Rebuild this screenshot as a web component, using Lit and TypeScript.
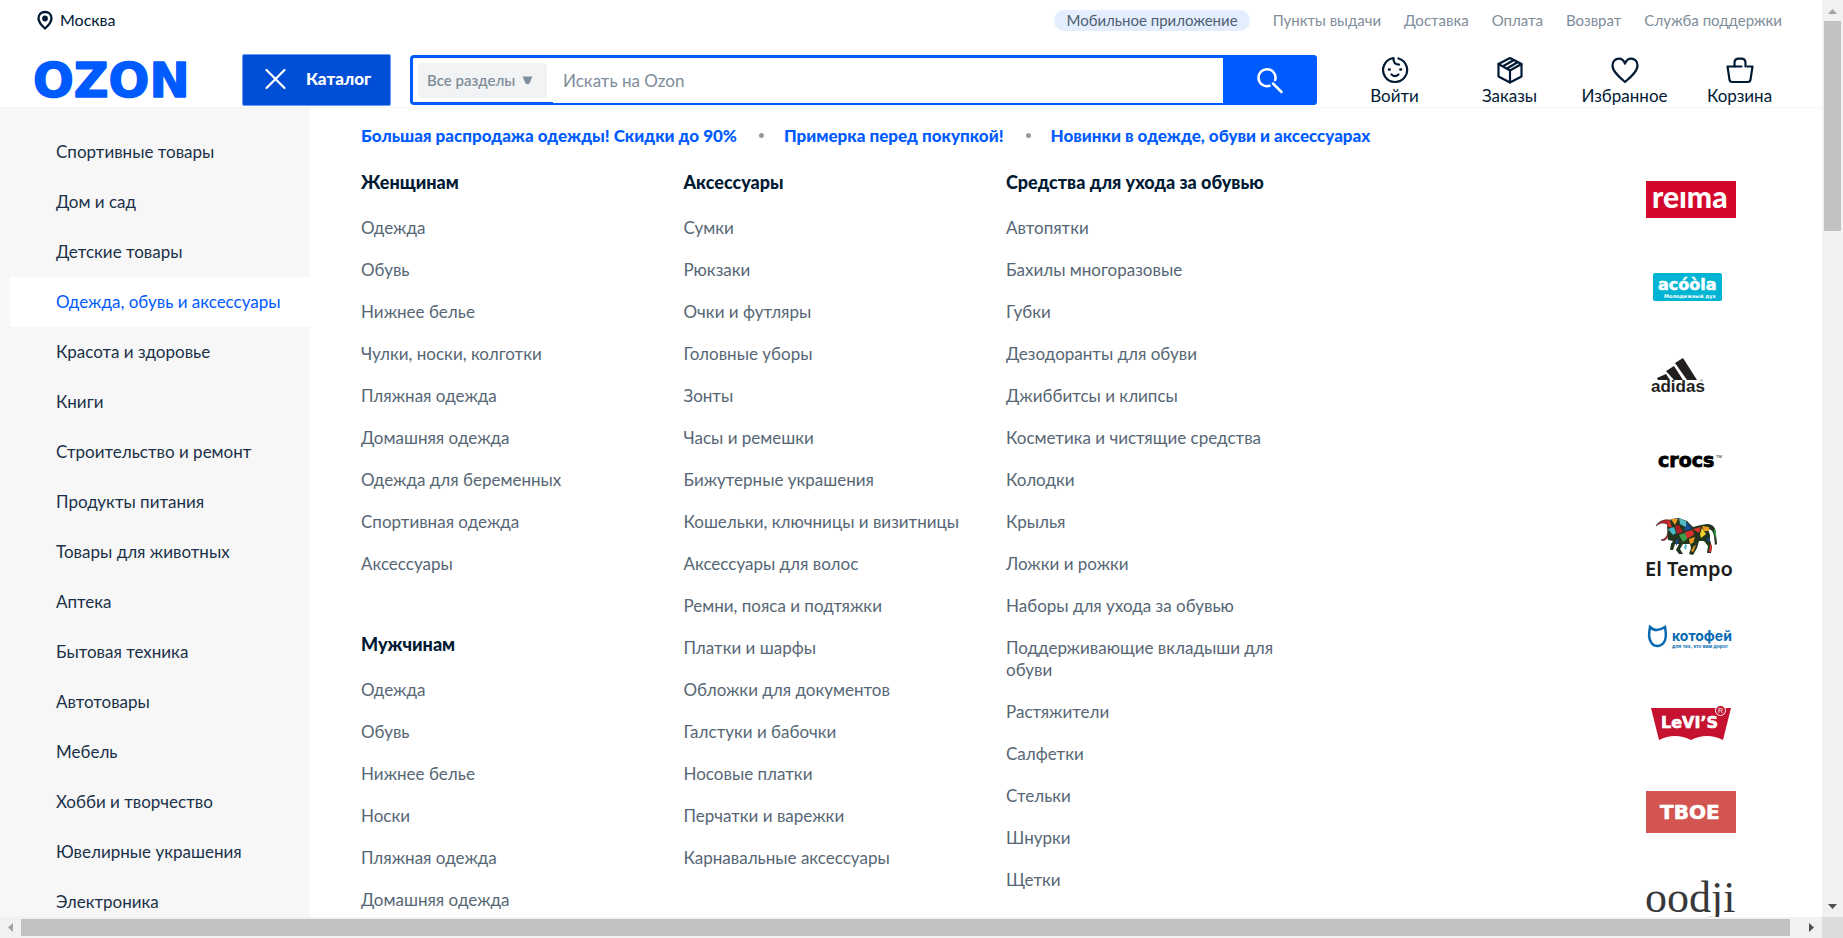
import { LitElement, html, svg, css } from "lit";
import { customElement, state } from "lit/decorators.js";
import { classMap } from "lit/directives/class-map.js";

const SERVICE_LINKS = ["Пункты выдачи", "Доставка", "Оплата", "Возврат", "Служба поддержки"];

const CATEGORIES = [
  "Спортивные товары",
  "Дом и сад",
  "Детские товары",
  "Одежда, обувь и аксессуары",
  "Красота и здоровье",
  "Книги",
  "Строительство и ремонт",
  "Продукты питания",
  "Товары для животных",
  "Аптека",
  "Бытовая техника",
  "Автотовары",
  "Мебель",
  "Хобби и творчество",
  "Ювелирные украшения",
  "Электроника",
];

const PROMOS = [
  "Большая распродажа одежды! Скидки до 90%",
  "Примерка перед покупкой!",
  "Новинки в одежде, обуви и аксессуарах",
];

interface Group {
  title: string;
  items: string[];
}

const COLUMNS: Group[][] = [
  [
    {
      title: "Женщинам",
      items: [
        "Одежда",
        "Обувь",
        "Нижнее белье",
        "Чулки, носки, колготки",
        "Пляжная одежда",
        "Домашняя одежда",
        "Одежда для беременных",
        "Спортивная одежда",
        "Аксессуары",
      ],
    },
    {
      title: "Мужчинам",
      items: ["Одежда", "Обувь", "Нижнее белье", "Носки", "Пляжная одежда", "Домашняя одежда"],
    },
  ],
  [
    {
      title: "Аксессуары",
      items: [
        "Сумки",
        "Рюкзаки",
        "Очки и футляры",
        "Головные уборы",
        "Зонты",
        "Часы и ремешки",
        "Бижутерные украшения",
        "Кошельки, ключницы и визитницы",
        "Аксессуары для волос",
        "Ремни, пояса и подтяжки",
        "Платки и шарфы",
        "Обложки для документов",
        "Галстуки и бабочки",
        "Носовые платки",
        "Перчатки и варежки",
        "Карнавальные аксессуары",
      ],
    },
  ],
  [
    {
      title: "Средства для ухода за обувью",
      items: [
        "Автопятки",
        "Бахилы многоразовые",
        "Губки",
        "Дезодоранты для обуви",
        "Джиббитсы и клипсы",
        "Косметика и чистящие средства",
        "Колодки",
        "Крылья",
        "Ложки и рожки",
        "Наборы для ухода за обувью",
        "Поддерживающие вкладыши для обуви",
        "Растяжители",
        "Салфетки",
        "Стельки",
        "Шнурки",
        "Щетки",
      ],
    },
  ],
];

const ACTIONS = [
  {
    label: "Войти",
    icon: svg`<path d="M11.500 2.300A12 12 0 1 0 17.500 2.500"/><path d="M12.500 2.100c-.2 3.900 2 6.400 5.500 6.600"/><path d="M10.500 18.500c2.300 2.200 4.700 2.200 7 0"/><path d="M8 13.500h.600M19.400 13.500h.600" stroke-width="2.600"/>`,
  },
  {
    label: "Заказы",
    icon: svg`<path d="M14 2 25.500 8v12.500L14 26.500 2.500 20.500V8z"/><path d="M2.500 8 14 14.500 25.500 8M14 14.500v12M7 10.300 17.500 4.200M11 12.500 21.500 6.300"/>`,
  },
  {
    label: "Избранное",
    icon: svg`<path d="M14 26C8 21 1.500 15.500 1.500 9.500 1.500 5.500 4.300 2.700 7.800 2.700c3 0 5 1.600 6.200 5 1.200-3.400 3.200-5 6.200-5 3.500 0 6.300 2.800 6.300 6.800C26.500 15.500 20 21 14 26z"/>`,
  },
  {
    label: "Корзина",
    icon: svg`<path d="M15.500 10.500H1.500l2 13.200c.2 1.700 1 2.300 2.700 2.300h15.600c1.700 0 2.500-.6 2.700-2.300l2-13.200h-5.300"/><path d="M8.500 10.500V7c0-2.800 1.500-4.300 4.300-4.300h2.400c2.800 0 4.300 1.500 4.300 4.300v3.500"/>`,
  },
];

/* Brand tiles share a 90x88 canvas. */
const BRANDS = [
  {
    name: "Reima",
    art: svg`<rect y="25" width="90" height="37" fill="#d4082d"/>
      <text x="6" y="52" class="lato" font-size="30" font-weight="900" fill="#fff">reıma</text>`,
  },
  {
    name: "Acoola",
    art: svg`<rect x="7" y="29" width="69" height="28" rx="2" fill="#00b5d3"/>
      <text x="12" y="46" class="wide" font-size="16" font-weight="700" fill="#fff" stroke="#fff" stroke-width=".5">acóòla</text>
      <text x="18" y="54" class="wide" font-size="5" font-weight="700" fill="#fff">Молодежный дух</text>`,
  },
  {
    name: "Adidas",
    art: svg`<g fill="#231f20"><path d="m11 46 9-4 4 6H12z"/><path d="m20 39 8-5 9 14h-9z"/><path d="m29 31 8-5 14 22h-10z"/></g>
      <text x="5" y="60" class="sans" font-size="17" font-weight="700" fill="#231f20">adidas</text>
      <text x="54" y="50" class="sans" font-size="4" fill="#231f20">®</text>`,
  },
  {
    name: "Crocs",
    art: svg`<text x="12" y="47" class="wide" font-size="19" font-weight="700" fill="#000" stroke="#000" stroke-width=".8">crocs</text>
      <text x="70" y="38" class="sans" font-size="4" fill="#000">TM</text>`,
  },
  {
    name: "El Tempo",
    art: svg`
      <path d="M24 12c-7-1-12 2-14 6 5-4 9-4 13 0M25 24c-3 5-5 10-10 8 4-1 6-3 7-8" fill="#c3262b" stroke="#1f2220" stroke-width=".6"/>
      <path d="M21 18l4-7 8-1 8 3 6 6 8-2 6-1c6 0 9 4 9 10l1 10-2 1-1-9c-1-5-3-7-6-7l2 6 0 5 2 7-1 6-4 0 1-7-4-5-5 0-2 7-4 7-4-1 2-6-1-4-7 0-3 5 3 5-4 0-3-4 3-6-4 0-2 6-3 0 1-6 2-3-5-1z" fill="#22351f"/>
      <path d="M25 11l7 0-3 6zM56 18l7 1 0 4-5 0z" fill="#f39b1d"/>
      <path d="M33 10l7 3 1 7-7-4z" fill="#53b9c4"/><path d="M41 14l5 7-8 2z" fill="#1a4a96"/>
      <path d="M24 13l2 7-5-2zM47 21l8-2-2 6z" fill="#e13429"/>
      <path d="M29 18l4-1 4 7-6 2z" fill="#ad1e25"/><path d="M22 21l6-2 2 6-3 2z" fill="#43bacb"/>
      <path d="M39 24l8-2 1 5-8 4z" fill="#d92f2b"/><path d="M54 26l2-6 4 6-5 4z" fill="#f6d12c"/>
      <path d="M33 27l6-2 2 6-4 3z" fill="#3aa14a"/><path d="M30 32l3-1-1 4-2 3z" fill="#1a4a96"/>
      <path d="M43 31l6-2-2 6-3 1z" fill="#f39b1d"/><path d="M62 28l2 5-3 0z" fill="#1a4a96"/>
      <path d="M68 20l2 4 0 7-2-6z" fill="#2ba04a"/><path d="M39 36l2 1-1 5-2-2z" fill="#53b9c4"/><path d="M64 36l2 2-1 6-2 0z" fill="#d92f2b"/><path d="M48 38l2-1-3 7-2-1z" fill="#f39b1d"/>
      <text x="-1" y="68" class="noto" font-size="20" font-weight="600" fill="#1d1d1b">El Tempo</text>`,
  },
  {
    name: "Котофей",
    art: svg`<path d="M4 31c4 4 9 4 15 0 .8 5 2.500 11-1.500 16-3.500 4-9 4-12 0-3.500-5-2.500-10-1.500-16z" fill="none" stroke="#0469b1" stroke-width="2.500"/>
      <text x="26" y="45" class="inter" font-size="14" font-weight="700" fill="#0469b1">котофей</text>
      <text x="26" y="52" class="sans" font-size="5" font-weight="700" fill="#0469b1">для тех, кто вам дорог</text>`,
  },
  {
    name: "Levi's",
    art: svg`<path d="M5 24h80l-8 32q-16-8-32 0-16-8-32 0z" fill="#c41230"/>
      <text x="15" y="44" class="wide" font-size="16" font-weight="700" fill="#fff" stroke="#fff" stroke-width=".6">LeVI’S</text>
      <circle cx="74.500" cy="26.500" r="5" fill="#c41230" stroke="#fff"/><text x="72" y="29" class="sans" font-size="7" fill="#fff">R</text>`,
  },
  {
    name: "Твое",
    art: svg`<rect y="19" width="90" height="42" fill="#d25551"/>
      <text x="14" y="47" class="wide" font-size="20" font-weight="700" fill="#fff" stroke="#fff" stroke-width=".6">ТВОЕ</text>`,
  },
  {
    name: "oodji",
    art: svg`<text x="-1" y="52" class="serif" font-size="44" fill="#38383a">oodji</text>`,
  },
];

@customElement("site-header")
class SiteHeader extends LitElement {
  static styles = css`
    :host {
      display: block;
      border-bottom: 1px solid #f5f6f8;
    }
    a {
      color: inherit;
      text-decoration: none;
    }
    .service {
      display: flex;
      justify-content: space-between;
      align-items: center;
      height: 40px;
      padding: 0 40px 0 36px;
    }
    .place {
      display: flex;
      align-items: center;
      gap: 6px;
      padding: 0;
      border: 0;
      background: none;
      font: 16px/20px Lato, sans-serif;
      color: #001a34;
    }
    .links {
      display: flex;
      align-items: center;
      gap: 23px;
      font-size: 15px;
      line-height: 21px;
      color: #808d9a;
    }
    .pill {
      padding: 0 12px;
      border-radius: 11px;
      background: #e5eeff;
      color: #4d5f71;
    }
    .bar {
      display: flex;
      align-items: flex-start;
      padding: 14px 25px 0 34px;
      height: 53px;
    }
    .logo {
      display: block;
      width: 208px;
      height: 52px;
    }
    .logo text {
      font-family: "DejaVu Sans", sans-serif;
    }
    .catalog {
      display: flex;
      align-items: center;
      gap: 20px;
      width: 149px;
      height: 52px;
      margin-right: 19px;
      padding: 0 0 2px 22px;
      border: 1px solid #6a9cf5;
      border-radius: 2px;
      background: #004ed6;
      color: #fff;
      font: 900 17px/22px Lato, sans-serif;
    }
    .search {
      display: flex;
      flex: 1;
      height: 50px;
      margin-top: 1px;
      box-sizing: border-box;
      border: 3px solid #005bff;
      border-width: 3px 0 2px 3px;
      border-radius: 4px;
    }
    .scope {
      display: grid;
      align-items: center;
      width: 140px;
      box-sizing: border-box;
      padding: 0 6px 0 5px;
      border-bottom: 1px solid #005bff;
    }
    .scope select {
      grid-area: 1 / 1;
      height: 35px;
      padding: 0 9px;
      border: 0;
      border-radius: 3px;
      appearance: none;
      background: #f2f3f5;
      color: #808d9a;
      font: 600 15px/20px Lato, sans-serif;
    }
    .scope svg {
      grid-area: 1 / 1;
      justify-self: end;
      margin-right: 14px;
      pointer-events: none;
    }
    .query {
      flex: 1;
      min-width: 0;
      padding: 0 10px;
      border: 0;
      outline: 0;
      background: none;
      color: #001a34;
      font: 17px/22px Lato, sans-serif;
    }
    .query::placeholder {
      color: #808d9a;
      opacity: 1;
    }
    .go {
      display: flex;
      align-items: center;
      justify-content: center;
      width: 94px;
      height: 50px;
      margin-top: -3px;
      border: 0;
      border-radius: 0 4px 4px 0;
      background: #005bff;
    }
    .actions {
      display: flex;
      margin-left: 20px;
      padding-top: 2px;
    }
    .action {
      display: flex;
      flex-direction: column;
      align-items: center;
      gap: 1px;
      width: 115px;
      font-size: 17px;
      line-height: 22px;
      color: #001a34;
    }
    .action svg {
      fill: none;
      stroke: #001a34;
      stroke-width: 2.2;
      stroke-linecap: round;
      stroke-linejoin: round;
    }
  `;

  render() {
    return html`
      <div class="service">
        <button class="place">
          <svg width="18" height="20" viewBox="0 0 18 20">
            <path d="M9 2c4 0 6.500 2.800 6.500 6.300C15.500 12 12.500 15.500 9 18.500 5.500 15.500 2.500 12 2.500 8.300 2.500 4.800 5 2 9 2z" fill="none" stroke="#001a34" stroke-width="2.300" />
            <circle cx="9" cy="8.500" r="2.900" fill="#001a34" />
          </svg>
          Москва
        </button>
        <nav class="links">
          <a class="pill" href="#">Мобильное приложение</a>
          ${SERVICE_LINKS.map((t) => html`<a href="#">${t}</a>`)}
        </nav>
      </div>
      <div class="bar">
        <a href="#" aria-label="Ozon">
          <svg class="logo" viewBox="0 0 208 52">
            <text x="-1" y="43" font-size="48" font-weight="700" fill="#005bff" stroke="#005bff" stroke-width="1.500" stroke-linejoin="round">OZON</text>
          </svg>
        </a>
        <button class="catalog">
          <svg width="21" height="22" viewBox="0 0 21 22">
            <path d="M1.500 2 19.500 20M19.500 2 1.500 20" stroke="#fff" stroke-width="2.200" stroke-linecap="round" />
          </svg>
          Каталог
        </button>
        <form class="search" @submit=${(e: Event) => e.preventDefault()}>
          <div class="scope">
            <select aria-label="Раздел">
              <option>Все разделы</option>
            </select>
            <svg width="11" height="9" viewBox="0 0 11 9"><path d="M.500.500h10L7.500 7.300q-2 2-4 0z" fill="#808d9a" /></svg>
          </div>
          <input class="query" type="text" aria-label="Поиск" placeholder="Искать на Ozon" />
          <button class="go" aria-label="Найти">
            <svg width="28" height="28" viewBox="0 0 28 28" fill="none" stroke="#fff" stroke-width="2.500" stroke-linecap="round">
              <path d="M13.500 19.800A8.500 8.500 0 1 1 19.200 14M17 17.500l8.500 8.500" />
            </svg>
          </button>
        </form>
        <nav class="actions">
          ${ACTIONS.map(
            (a) => html`<a class="action" href="#">
              <svg width="28" height="28" viewBox="0 0 28 28">${a.icon}</svg>
              ${a.label}
            </a>`
          )}
        </nav>
      </div>
    `;
  }
}

@customElement("brand-list")
class BrandList extends LitElement {
  static styles = css`
    :host {
      display: flex;
      flex-direction: column;
    }
    a,
    svg {
      display: block;
    }
    svg {
      overflow: visible;
    }
    .lato {
      font-family: Lato, sans-serif;
    }
    .wide {
      font-family: "DejaVu Sans", sans-serif;
    }
    .sans {
      font-family: "Liberation Sans", sans-serif;
    }
    .inter {
      font-family: Inter, sans-serif;
    }
    .noto {
      font-family: "Noto Sans", sans-serif;
    }
    .serif {
      font-family: "Liberation Serif", serif;
    }
  `;

  render() {
    return BRANDS.map(
      (b) => html`<a href="#" aria-label=${b.name}><svg width="90" height="88" viewBox="0 0 90 88">${b.art}</svg></a>`
    );
  }
}

@customElement("catalog-menu")
class CatalogMenu extends LitElement {
  @state() private active = 3;

  static styles = css`
    :host {
      display: flex;
      min-height: 0;
      overflow: hidden;
    }
    a {
      color: inherit;
      text-decoration: none;
    }
    ul {
      margin: 0;
      padding: 0;
      list-style: none;
    }
    .side {
      flex: none;
      width: 300px;
      padding: 19px 0 0 10px;
      background: #f7f7f8;
      font-size: 17px;
      line-height: 50px;
      color: #1a3148;
    }
    .category {
      display: block;
      padding-left: 46px;
    }
    .active {
      background: #fff;
      color: #005bff;
    }
    .content {
      flex: 1;
      min-width: 0;
      padding: 17px 86px 0 51px;
      font-size: 17px;
      line-height: 22px;
    }
    .promos {
      display: flex;
      gap: 22px;
      color: #005bff;
      font-weight: 900;
    }
    .promo + .promo::before {
      content: "";
      display: inline-block;
      width: 5px;
      height: 5px;
      margin-right: 20px;
      border-radius: 50%;
      background: #999;
      vertical-align: 4px;
    }
    .body {
      display: flex;
    }
    .columns {
      flex: 1;
      display: grid;
      grid-template-columns: repeat(4, 1fr);
      column-gap: 5px;
      padding-top: 24px;
    }
    .group {
      padding-right: 40px;
      margin-bottom: 58px;
      color: #566675;
    }
    .title {
      margin: 0 0 24px;
      font-size: 18px;
      line-height: 22px;
      font-weight: 900;
      color: #001a34;
    }
    .item {
      margin-bottom: 20px;
    }
    .brands {
      padding-top: 9px;
    }
  `;

  render() {
    return html`
      <nav class="side">
        <ul>
          ${CATEGORIES.map(
            (c, i) => html`<li>
              <a href="#" class=${classMap({ category: true, active: i === this.active })} @mouseenter=${() => (this.active = i)}>${c}</a>
            </li>`
          )}
        </ul>
      </nav>
      <div class="content">
        <div class="promos">${PROMOS.map((p) => html`<a class="promo" href="#">${p}</a>`)}</div>
        <div class="body">
          <div class="columns">
            ${COLUMNS.map(
              (groups) => html`<div>
                ${groups.map(
                  (g) => html`<section class="group">
                    <h3 class="title">${g.title}</h3>
                    <ul>
                      ${g.items.map((t) => html`<li class="item"><a href="#">${t}</a></li>`)}
                    </ul>
                  </section>`
                )}
              </div>`
            )}
          </div>
          <brand-list class="brands"></brand-list>
        </div>
      </div>
    `;
  }
}

@customElement("app-root")
class AppRoot extends LitElement {
  static styles = css`
    :host {
      display: grid;
      grid-template: minmax(0, 1fr) 21px / minmax(0, 1fr) 21px;
      height: 100vh;
      overflow: hidden;
      background: #fff;
      font-family: Lato, sans-serif;
    }
    .page {
      display: flex;
      flex-direction: column;
      overflow: hidden;
    }
    .menu {
      flex: 1;
    }
    .track {
      display: flex;
      align-items: center;
      justify-content: space-between;
      background: #f1f1f1;
    }
    .vertical {
      flex-direction: column;
    }
    .arrow {
      display: block;
      flex: none;
    }
    .rail {
      flex: 1;
    }
    .vertical .thumb {
      width: 17px;
      height: 24%;
      background: #c1c1c1;
    }
    .horizontal .thumb {
      height: 17px;
      margin-right: 11px;
      background: #c1c1c1;
    }
    .vertical .rail {
      display: flex;
      justify-content: center;
      width: 21px;
    }
    .corner {
      background: #dcdcdc;
    }
  `;

  render() {
    return html`
      <div class="page">
        <site-header></site-header>
        <catalog-menu class="menu"></catalog-menu>
      </div>
      <div class="track vertical" aria-hidden="true">
        <svg class="arrow" width="21" height="21"><path d="m6 14 4.500-5 4.500 5z" fill="#a3a3a3" /></svg>
        <div class="rail"><div class="thumb"></div></div>
        <svg class="arrow" width="21" height="21"><path d="m6 8 4.500 5L15 8z" fill="#505050" /></svg>
      </div>
      <div class="track horizontal" aria-hidden="true">
        <svg class="arrow" width="21" height="21"><path d="m13 6-5 4.500 5 4.500z" fill="#a3a3a3" /></svg>
        <div class="rail"><div class="thumb"></div></div>
        <svg class="arrow" width="21" height="21"><path d="m8 6 5 4.500L8 15z" fill="#505050" /></svg>
      </div>
      <div class="corner"></div>
    `;
  }
}
